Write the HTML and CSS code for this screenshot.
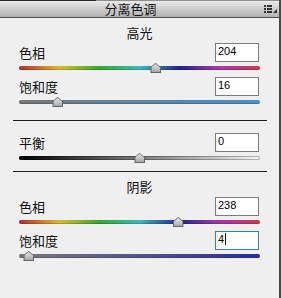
FILE: index.html
```html
<!DOCTYPE html>
<html lang="zh">
<head>
<meta charset="utf-8">
<title>分离色调</title>
<link rel="stylesheet" href="styles.css">
</head>
<body>
<div class="panel">
  <div class="header">
    <span class="title">分离色调</span>
    <svg class="menu" width="14" height="9" viewBox="0 0 14 9">
      <rect x="0" y="0" width="2" height="2"/><rect x="3" y="0" width="5" height="2"/>
      <rect x="0" y="3" width="2" height="2"/><rect x="3" y="3" width="5" height="2"/>
      <rect x="0" y="6" width="2" height="2"/><rect x="3" y="6" width="5" height="2"/>
      <polygon points="13,4 13,8 9,8"/>
    </svg>
  </div>
  <div class="content">
    <div class="heading">高光</div>
    <div class="group">
      <div class="row"><span class="label">色相</span><div class="field">204</div></div>
      <div class="slider"><div class="track hue"></div><div class="thumb" style="left:56.67%"></div></div>
    </div>
    <div class="group">
      <div class="row"><span class="label">饱和度</span><div class="field">16</div></div>
      <div class="slider"><div class="track sat-high"></div><div class="thumb" style="left:16%"></div></div>
    </div>

    <div class="divider"></div>

    <div class="group balance">
      <div class="row"><span class="label">平衡</span><div class="field">0</div></div>
      <div class="slider"><div class="track bal"></div><div class="thumb" style="left:50%"></div></div>
    </div>

    <div class="divider"></div>

    <div class="heading">阴影</div>
    <div class="group">
      <div class="row"><span class="label">色相</span><div class="field">238</div></div>
      <div class="slider"><div class="track hue"></div><div class="thumb" style="left:66.11%"></div></div>
    </div>
    <div class="group tight">
      <div class="row"><span class="label">饱和度</span><div class="field focus">4<span class="caret"></span></div></div>
      <div class="slider"><div class="track sat-shadow"></div><div class="thumb" style="left:4%"></div></div>
    </div>
  </div>
</div>
</body>
</html>
```
FILE: styles.css
```css
* { box-sizing: border-box; }
html, body { margin: 0; padding: 0; background: #efefef; }
body { font-family: "Noto Sans CJK SC", "Noto Sans", sans-serif; color: #111; }

.panel {
  width: 281px;
  height: 298px;
  background: #efefef;
  border-right: 2px solid #4a4a4a;
  overflow: hidden;
}

.header {
  position: relative;
  height: 18px;
  border-top: 1px solid #8e8e8e;
  border-bottom: 1px solid #4e4e4e;
  background: linear-gradient(#e9e9e9, #b2b2b2);
  display: flex;
  align-items: center;
  justify-content: center;
  padding-right: 18px;
}
.header::before {
  content: "";
  position: absolute;
  left: 0;
  top: -1px;
  width: 96px;
  height: 1px;
  background: #2c2c2c;
}
.title {
  font-size: 13px;
  line-height: 16px;
  color: #151515;
}
.menu {
  position: absolute;
  left: 264px;
  top: 4px;
  fill: #333;
}

.content {
  padding: 0 19px;
}

.heading {
  font-size: 13px;
  line-height: 16px;
  text-align: center;
  margin: 7px 0 2px;
}

.group { margin-bottom: 5px; }
.group.tight { margin-bottom: 0; }

.row {
  height: 19px;
  display: flex;
  align-items: center;
  justify-content: space-between;
}
.label {
  font-size: 13px;
  line-height: 19px;
}
.field {
  width: 44px;
  height: 19px;
  margin-right: 1px;
  border: 1px solid #7b7b7b;
  background: #fff;
  font-family: "Liberation Sans", Arial, sans-serif;
  font-size: 11px;
  line-height: 15px;
  padding-left: 2px;
  color: #000;
}
.field.focus { border-color: #3b7db6; }
.caret {
  display: inline-block;
  width: 1px;
  height: 12px;
  background: #000;
  margin-left: 1px;
  vertical-align: -2px;
}

.slider {
  position: relative;
  height: 10px;
  padding-top: 4px;
}
.track {
  height: 4px;
  border-radius: 2px;
  box-shadow: inset 0 -1px rgba(0,0,0,0.18);
}
.hue {
  background: linear-gradient(to right,
    #b42c2c 0%, #d9bb2c 16.7%, #3aa634 33.3%, #3cb8b8 50%,
    #22238c 66.7%, #a838a8 83.3%, #c33c50 100%);
}
.sat-high { background: linear-gradient(to right, #767676, #4a90c9); }
.sat-shadow { background: linear-gradient(to right, #7a7a7a, #2a2c9c); }
.bal {
  background: linear-gradient(to right, #000, #f6f6f6);
  box-shadow: inset 0 0 0 1px rgba(0,0,0,0.28);
}

.thumb {
  position: absolute;
  top: 1px;
  width: 11px;
  height: 10px;
  transform: translateX(-50%);
  background: #666;
  clip-path: polygon(50% 0, 100% 45%, 100% 100%, 0 100%, 0 45%);
}
.thumb::after {
  content: "";
  position: absolute;
  inset: 1px;
  background: linear-gradient(#e6e6e6, #a8a8a8);
  clip-path: polygon(50% 0, 100% 45%, 100% 100%, 0 100%, 0 45%);
}

.divider {
  height: 1px;
  background: #1e1e1e;
  margin: 14px -7px 12px -6px;
}
.group.balance + .divider { margin-top: 9px; margin-bottom: 0; }
.divider + .heading { margin-top: 7px; }
```
